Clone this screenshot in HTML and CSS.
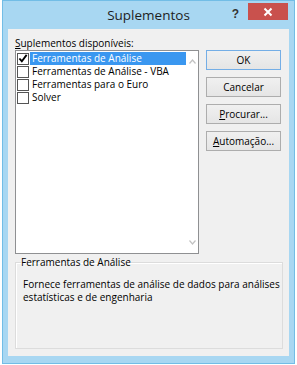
FILE: index.html
```html
<!DOCTYPE html>
<html lang="pt">
<head>
    <meta charset="UTF-8">
    <meta name="viewport" content="width=device-width, initial-scale=1.0">
    <title>Suplementos</title>
    <link rel="stylesheet" href="styles.css">
</head>
<body>
    <div class="window">
        <div class="titlebar">
            <span class="title">Suplementos</span>
            <div class="controls">
                <span class="help">?</span>
                <span class="close">
                    <svg width="10" height="10" viewBox="0 0 10 10"><path d="M1.5 1.5 L8.5 8.5 M8.5 1.5 L1.5 8.5" stroke="#fff" stroke-width="2"/></svg>
                </span>
            </div>
        </div>

        <div class="client">
            <div class="top">
                <div class="left">
                    <div class="label"><u>S</u>uplementos disponíveis:</div>
                    <div class="listbox">
                        <ul class="items">
                            <li class="item selected">
                                <span class="box">
                                    <svg width="11" height="11" viewBox="0 0 11 11"><path d="M1.5 5.5 L4.2 8.5 L9.5 1.5" fill="none" stroke="#000" stroke-width="2"/></svg>
                                </span>
                                <span class="text">Ferramentas de Análise</span>
                            </li>
                            <li class="item">
                                <span class="box"></span>
                                <span class="text">Ferramentas de Análise - VBA</span>
                            </li>
                            <li class="item">
                                <span class="box"></span>
                                <span class="text">Ferramentas para o Euro</span>
                            </li>
                            <li class="item">
                                <span class="box"></span>
                                <span class="text">Solver</span>
                            </li>
                        </ul>
                        <div class="scrollbar">
                            <svg width="7" height="5" viewBox="0 0 7 5"><path d="M0.5 4.5 L3.5 1 L6.5 4.5" fill="none" stroke="#c2c2c2" stroke-width="1.2"/></svg>
                            <svg width="7" height="5" viewBox="0 0 7 5"><path d="M0.5 0.5 L3.5 4 L6.5 0.5" fill="none" stroke="#c2c2c2" stroke-width="1.2"/></svg>
                        </div>
                    </div>
                </div>

                <div class="buttons">
                    <button class="btn default">OK</button>
                    <button class="btn">Cancelar</button>
                    <button class="btn"><u>P</u>rocurar...</button>
                    <button class="btn"><u>A</u>utomação...</button>
                </div>
            </div>

            <fieldset class="group">
                <legend>Ferramentas de Análise</legend>
                <p class="description">Fornece ferramentas de análise de dados para análises estatísticas e de engenharia</p>
            </fieldset>
        </div>
    </div>
</body>
</html>
```

FILE: styles.css
```css
body {
    margin: 0;
    background-color: #ffffff;
    font-family: "Open Sans", "Noto Sans", sans-serif;
    font-size: 10px;
    color: #000;
}
.window {
    box-sizing: border-box;
    width: 293px;
    height: 364px;
    margin-left: 2px;
    border: 1px solid #72bde6;
    background-color: #a8d7f2; /* frame blue */
    padding: 0 5px 7px 5px;
    display: flex;
    flex-direction: column;
}
.titlebar {
    height: 28px;
    display: grid;
    grid-template-columns: 1fr auto 1fr;
}
.title {
    grid-column: 2;
    font-size: 13.5px;
    line-height: 28px;
    color: #1e1e1e;
}
.controls {
    grid-column: 3;
    display: flex;
    justify-content: flex-end;
    align-items: flex-start;
}
.help {
    font-family: "Liberation Sans", sans-serif;
    font-weight: bold;
    font-size: 12px;
    line-height: 12px;
    margin-top: 7px;
    margin-right: 9px;
    color: #333;
}
.close {
    width: 40px;
    height: 17px;
    margin-top: 2px;
    margin-right: 1px;
    background-color: #c9514d;
    display: flex;
    align-items: center;
    justify-content: center;
}
.client {
    flex: 1;
    background-color: #f0f0f0;
    padding: 7px 6px 7px 7px;
    display: flex;
    flex-direction: column;
}
.top {
    display: flex;
    flex-shrink: 0;
}
.left {
    width: 184px;
}
.label {
    line-height: 14px;
}
.listbox {
    box-sizing: border-box;
    height: 204px;
    border: 1px solid #8f9092;
    background-color: #fff;
    display: flex;
}
.items {
    flex: 1;
    list-style: none;
    margin: 0;
    padding: 1px 0 0 0;
}
.item {
    display: flex;
    align-items: center;
    height: 13px;
}
.box {
    box-sizing: border-box;
    width: 12px;
    height: 12px;
    margin-left: 1px;
    border: 1px solid #555;
    background-color: #fff;
    display: flex;
    align-items: center;
    justify-content: center;
}
.text {
    flex: 1;
    height: 13px;
    line-height: 13px;
    margin-left: 1px;
    padding-left: 2px;
    white-space: nowrap;
    overflow: hidden;
}
.selected .text {
    background-color: #3a97f0;
    color: #fff;
}
.scrollbar {
    width: 12px;
    display: flex;
    flex-direction: column;
    justify-content: space-between;
    align-items: center;
    padding: 8px 0 8px 0;
}
.buttons {
    margin-left: 7px;
    padding-top: 14px;
    display: flex;
    flex-direction: column;
    gap: 7px;
}
.btn {
    box-sizing: border-box;
    width: 75px;
    height: 20px;
    padding: 0;
    font-family: inherit;
    font-size: 10px;
    color: #000;
    border: 1px solid #adadad;
    background: linear-gradient(#f0f0f0, #e5e5e5);
}
.btn.default {
    border-color: #74aee6;
}
.group {
    margin: 2px 0 0 0;
    padding: 10px 2px 0 7px;
    flex: 1;
    border: 1px solid #dcdcdc;
    box-shadow: inset 1px 1px 0 #fff;
}
.group legend {
    padding: 0;
    margin-left: -2px;
    line-height: 12px;
}
.description {
    margin: 0;
    line-height: 13px;
}
```
